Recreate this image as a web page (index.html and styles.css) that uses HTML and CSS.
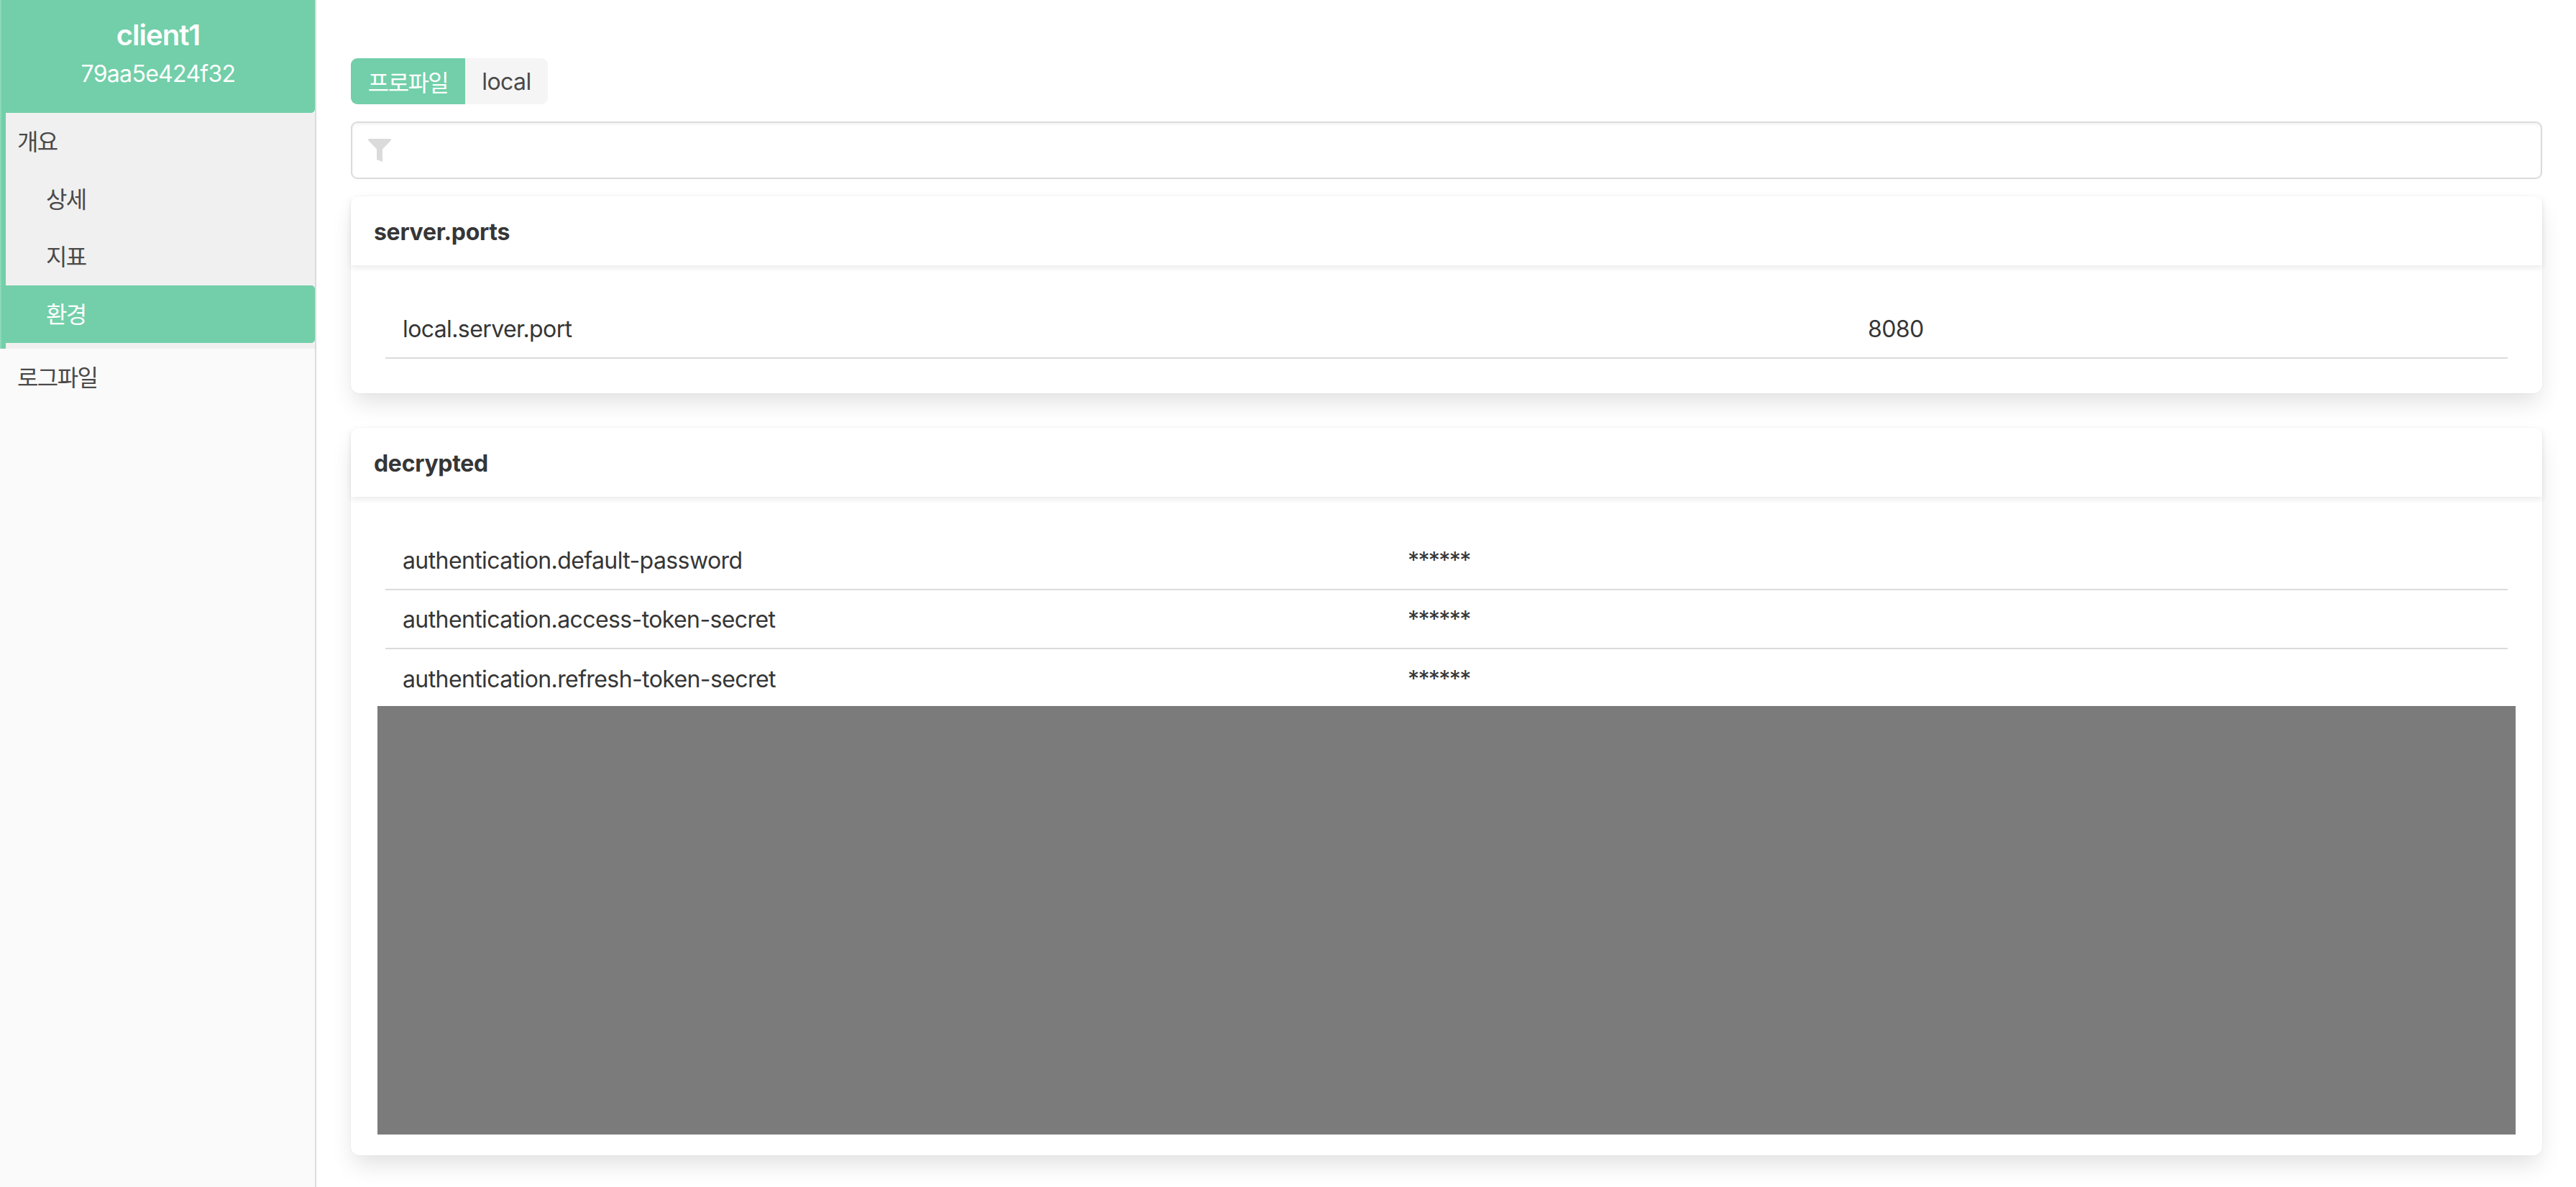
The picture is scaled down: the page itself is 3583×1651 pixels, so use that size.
FILE: index.html
```html
<!DOCTYPE html>
<html lang="ko">
<head>
<meta charset="utf-8">
<title>client1</title>
<link rel="stylesheet" href="styles.css">
</head>
<body>
<div class="app">
  <aside class="sidebar">
    <header class="brand">
      <div class="brand-name">client1</div>
      <div class="brand-id">79aa5e424f32</div>
    </header>
    <nav class="nav">
      <div class="nav-group">
        <a class="nav-item">개요</a>
        <a class="nav-item nav-sub">상세</a>
        <a class="nav-item nav-sub">지표</a>
        <a class="nav-item nav-sub nav-active">환경</a>
      </div>
      <a class="nav-item">로그파일</a>
    </nav>
  </aside>
  <main class="main">
    <div class="tags">
      <span class="tag tag-key">프로파일</span>
      <span class="tag tag-value">local</span>
    </div>
    <div class="filter">
      <svg class="filter-icon" viewBox="0 0 32 32" aria-hidden="true"><path d="M1.500 0H30.500C32 0 32.500 1.500 31.500 2.500L20 14.500V32L12 29V14.500L.5 2.500C-.5 1.500 0 0 1.500 0Z"/></svg>
    </div>
    <section class="card">
      <h2 class="card-title">server.ports</h2>
      <div class="card-body">
        <div class="prop-row prop-row-ports"><span>local.server.port</span><span>8080</span></div>
      </div>
    </section>
    <section class="card">
      <h2 class="card-title">decrypted</h2>
      <div class="card-body card-body-tight">
        <div class="prop-row prop-row-secret"><span>authentication.default-password</span><span class="masked">******</span></div>
        <div class="prop-row prop-row-secret"><span>authentication.access-token-secret</span><span class="masked">******</span></div>
        <div class="prop-row prop-row-secret prop-row-last"><span>authentication.refresh-token-secret</span><span class="masked">******</span></div>
        <div class="redacted"></div>
      </div>
    </section>
  </main>
</div>
</body>
</html>
```
FILE: styles.css
```css
* { box-sizing: border-box; }
html, body { margin: 0; height: 100%; overflow: hidden; background: #fff; }
body {
  font-family: Inter, "Noto Sans CJK KR", sans-serif;
  font-size: 32px;
  letter-spacing: -.6px;
  color: #4a4a4a;
}
.app { display: flex; height: 1651px; }

.sidebar {
  width: 440px;
  flex: none;
  background: #fafafa;
  border-right: 2px solid #dbdbdb;
}
.brand {
  height: 157px;
  background: #72cfa9;
  border-left: 2px solid #8cd8b9;
  color: #fff;
  text-align: center;
  padding-top: 26px;
  border-bottom-right-radius: 5px;
}
.brand-name { font-size: 40px; font-weight: 600; line-height: 46px; letter-spacing: -1px; }
.brand-id { font-size: 32px; line-height: 40px; margin-top: 11px; letter-spacing: -.7px; }

.nav-group {
  background: linear-gradient(to right, #8cd8b9 2px, #72cfa9 2px, #72cfa9 8px, #f0f0f0 8px);
  padding-bottom: 8px;
}
.nav-item {
  display: flex;
  align-items: center;
  height: 80px;
  padding: 0 0 4px 24px;
  letter-spacing: -1.6px;
}
.nav-group .nav-sub { padding-left: 64px; }
.nav-group .nav-active {
  background: #72cfa9;
  color: #fff;
  margin-left: 2px;
  padding-left: 62px;
  border-radius: 0 5px 5px 0;
}

.main {
  flex: 1;
  min-width: 0;
  padding: 81px 47px 0 48px;
}
.tags { display: flex; height: 64px; }
.tag { display: flex; align-items: center; justify-content: center; }
.tag-key {
  width: 159px;
  background: #72cfa9;
  color: #fff;
  letter-spacing: -1.6px;
  border-radius: 9px 0 0 9px;
}
.tag-value {
  width: 115px;
  background: #f5f5f5;
  border-radius: 0 9px 9px 0;
}
.filter {
  height: 80px;
  margin-top: 24px;
  padding: 22px 22px;
  border: 2px solid #dbdbdb;
  border-radius: 9px;
  box-shadow: inset 0 2px 4px rgba(10, 10, 10, .05);
}
.filter-icon { display: block; width: 32px; height: 32px; fill: #dbdbdb; }

.card {
  margin-top: 24px;
  background: #fff;
  border-radius: 12px;
  box-shadow: 0 16px 32px -4px rgba(10, 10, 10, .12), 0 0 2px rgba(10, 10, 10, .08);
}
.card + .card { margin-top: 48px; }
.card-title {
  display: flex;
  align-items: center;
  height: 96px;
  margin: 0;
  padding: 2px 0 0 32px;
  font-size: 32px;
  font-weight: 700;
  letter-spacing: -.3px;
  color: #363636;
  box-shadow: 0 4px 8px rgba(10, 10, 10, .08);
}
.card-body { padding: 48px; }
.card-body-tight { padding-bottom: 29px; }
.prop-row {
  display: grid;
  align-items: center;
  height: 82px;
  padding: 2px 0 0 24px;
  border-bottom: 2px solid #dbdbdb;
  line-height: 40px;
  color: #363636;
}
.prop-row-ports { grid-template-columns: 2038px 1fr; }
.prop-row-secret { grid-template-columns: 1398px 1fr; }
.prop-row-last { border-bottom: 0; }
.masked { letter-spacing: -1.6px; }
.redacted {
  height: 596px;
  margin: -3px -11px 0;
  background: #7b7b7b;
}
```
